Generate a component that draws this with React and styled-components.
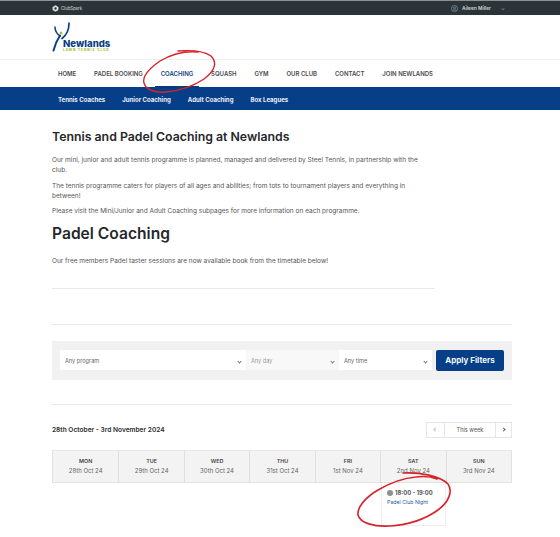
import React from "react";
import styled, { createGlobalStyle } from "styled-components";

const Global = createGlobalStyle`
  html, body { margin: 0; padding: 0; background: #fff; }
  body { font-family: Inter, "Liberation Sans", sans-serif; color: #333; width: 560px; height: 537px; overflow: hidden; }
  * { box-sizing: border-box; }
`;
const Page = styled.div`position: relative; width: 560px; height: 537px; overflow: hidden;`;
const TopBar = styled.div`
  height: 15px; background: #2b3439; border-top: 1px solid #8b9194;
  display: flex; align-items: center; justify-content: space-between; padding: 0 55px 0 52px;
`;
const Brand = styled.div`display: flex; align-items: center; gap: 2px; color: #c3c8ca; font-size: 4.2px; font-weight: 500;`;
const UserMenu = styled.div`display: flex; align-items: center; gap: 4px; color: #cfd3d5; font-size: 4.85px; font-weight: 600;`;
const Caret = styled.span`margin-left: 6px; font-size: 5px; color: #9aa0a3;`;
const LogoRow = styled.div`height: 44px; padding: 7px 0 0 52px;`;
const Logo = styled.div`position: relative; width: 60px; height: 32px;`;
const LogoName = styled.div`
  position: absolute; left: 11px; top: 15.5px; color: #0b3f86; font-size: 9.6px; font-weight: 800; line-height: 12px;
`;
const LogoTag = styled.div`
  position: absolute; left: 11px; top: 26px; color: #a2b92f; font-size: 2.9px; font-weight: 800; letter-spacing: 1.1px; line-height: 4px; white-space: nowrap;
`;
const Nav = styled.nav`
  height: 28px; border-top: 1px solid #eeeeee; display: flex; align-items: center; padding: 0 0 0 58px; gap: 17.85px;
`;
const NavItem = styled.div`
  position: relative; font-size: 6px; font-weight: 600; white-space: nowrap; line-height: 8px;
  color: ${p => (p.$active ? "#0e3f82" : "#4a4a4a")};
`;
const Marker = styled.span`
  position: absolute; left: -6px; right: -6px; top: 16px; height: 2.5px; background: #0a3a7c;
`;
const SubNav = styled.div`
  height: 23px; background: #063f88; display: flex; align-items: center; padding: 1px 0 0 58px; gap: 17px;
`;
const SubItem = styled.div`color: #eaf0f7; font-size: 6.05px; font-weight: 700; white-space: nowrap;`;
const Main = styled.main`padding: 0 48px 0 52px;`;
const Article = styled.article`width: 383px; height: 179px; padding-top: 20px; border-bottom: 1px solid #e8e8e8;`;
const H1 = styled.h1`margin: 0 0 11px; font-size: 12.3px; line-height: 14px; font-weight: 600; color: #25272a; white-space: nowrap;`;
const P = styled.p`margin: 0 0 ${p => p.$mb || 5.5}px; max-width: 372px; font-size: 6.53px; line-height: 10px; color: #555;`;
const H2 = styled.h2`margin: 0 0 12px; font-size: 15.6px; line-height: 20px; font-weight: 600; color: #25272a; white-space: nowrap;`;
const Rule = styled.hr`margin: ${p => p.$top}px 0 0; border: 0; border-top: 1px solid #e8e8e8;`;
const Filters = styled.div`
  margin-top: 16px; height: 38.5px; background: #f1f1f1; padding: 0 8px; display: flex; align-items: center;
`;
const Select = styled.div`
  width: ${p => p.$w}px; height: 20px; background: ${p => (p.$off ? "#f8f8f8" : "#fff")}; display: flex; align-items: center; justify-content: space-between;
  padding: 1px 5px 0 5px;
  font-size: 5.6px; color: ${p => (p.$off ? "#999" : "#666")};
`;
const Chevron = styled.span`
  width: 3px; height: 3px; border-right: 1px solid #777; border-bottom: 1px solid #777; transform: rotate(45deg); margin-top: 1px;
`;
const ApplyBtn = styled.button`
  margin-left: 4px; width: 68px; height: 21px; border: 0; border-radius: 2px; background: #063f88; color: #f2f6fa;
  font-family: inherit; font-size: 8px; font-weight: 700; padding: 0;
`;
const WeekRow = styled.div`margin-top: 17px; height: 16px; display: flex; align-items: center; justify-content: space-between;`;
const WeekLabel = styled.div`font-size: 6.6px; font-weight: 600; color: #2d2d2d; white-space: nowrap;`;
const Pager = styled.div`display: flex; height: 16px; border: 1px solid #e6e6e6;`;
const PageBtn = styled.div`
  width: ${p => p.$w}px; display: flex; align-items: center; justify-content: center; font-size: 5.6px; color: #555;
  & + & { border-left: 1px solid #e6e6e6; }
`;
const Arrow = styled.span`
  width: 3px; height: 3px; border-top: 1px solid ${p => p.$c}; border-right: 1px solid ${p => p.$c};
  transform: rotate(${p => (p.$left ? "-135deg" : "45deg")});
`;
const Days = styled.div`
  margin-top: 12px; height: 33px; display: grid; grid-template-columns: repeat(7, 1fr); background: #f3f3f3;
  border: 1px solid #e2e2e2; border-top-color: #e8e8e8;
`;
const Day = styled.div`
  display: flex; flex-direction: column; align-items: center; justify-content: center; gap: 1.5px; text-align: center;
  & + & { border-left: 1px solid #dedede; }
`;
const DayName = styled.div`font-size: 5.4px; line-height: 7px; font-weight: 600; color: #444;`;
const DayDate = styled.div`font-size: 6px; line-height: 7px; color: #666;`;
const Slots = styled.div`display: grid; grid-template-columns: repeat(7, 1fr);`;
const Slot = styled.div`
  grid-column: 6; height: 43px; padding: 6px 0 0 5.5px; border: 1px solid #eeeeee; border-top: 0;
`;
const SlotTime = styled.div`display: flex; align-items: center; gap: 2px; font-size: 5.8px; line-height: 8px; font-weight: 700; color: #555; white-space: nowrap;`;
const Dot = styled.span`width: 6px; height: 6px; border-radius: 50%; background: #8f8f8f;`;
const SlotName = styled.div`margin-top: 2.5px; font-size: 5.2px; line-height: 7px; color: #2a5aa0; white-space: nowrap;`;
const Scribble = styled.svg`position: absolute; left: 0; top: 0; pointer-events: none;`;

const ClubMark = () => (
  <svg width="7" height="7" viewBox="0 0 24 24">
    <path d="M12 1l10 5.500v11L12 23 2 17.500v-11z" fill="#d9dcdd" />
    <circle cx="12" cy="12" r="4" fill="#2b3439" />
  </svg>
);
const UserIcon = () => (
  <svg width="7" height="7" viewBox="0 0 24 24" fill="none" stroke="#8b9295" strokeWidth="2.400">
    <circle cx="12" cy="12" r="10.500" />
    <circle cx="12" cy="10" r="3.500" />
    <path d="M5.500 19.500c1.500-3.500 11.500-3.500 13 0" />
  </svg>
);
const Racket = () => (
  <svg width="20" height="30" viewBox="0 0 20 30" style={{ position: "absolute", left: 0, top: 0 }}>
    <path d="M1.500 28.500 C3 23 5 18 8 13.500" fill="none" stroke="#0b3f86" strokeWidth="2" strokeLinecap="round" />
    <path d="M3 5 C3 8.500 5 12 8 14" fill="none" stroke="#0b3f86" strokeWidth="1.500" strokeLinecap="round" />
    <path d="M17 1.200 C17 7 14.500 13 10 16.500" fill="none" stroke="#0b3f86" strokeWidth="1.700" strokeLinecap="round" />
    <circle cx="9" cy="11" r="1.500" fill="#a9c03c" />
  </svg>
);

const nav = ["HOME", "PADEL BOOKING", "COACHING", "SQUASH", "GYM", "OUR CLUB", "CONTACT", "JOIN NEWLANDS"];
const sub = ["Tennis Coaches", "Junior Coaching", "Adult Coaching", "Box Leagues"];
const days = [
  ["MON", "28th Oct 24"], ["TUE", "29th Oct 24"], ["WED", "30th Oct 24"], ["THU", "31st Oct 24"],
  ["FRI", "1st Nov 24"], ["SAT", "2nd Nov 24"], ["SUN", "3rd Nov 24"],
];

export default function App() {
  return (
    <Page>
      <Global />
      <TopBar>
        <Brand><ClubMark />ClubSpark</Brand>
        <UserMenu><UserIcon />Aileen Miller<Caret>⌄</Caret></UserMenu>
      </TopBar>
      <LogoRow>
        <Logo>
          <Racket />
          <LogoName>Newlands</LogoName>
          <LogoTag>LAWN TENNIS CLUB</LogoTag>
        </Logo>
      </LogoRow>
      <Nav>
        {nav.map(n => (
          <NavItem key={n} $active={n === "COACHING"}>{n}{n === "COACHING" && <Marker />}</NavItem>
        ))}
      </Nav>
      <SubNav>{sub.map(s => <SubItem key={s}>{s}</SubItem>)}</SubNav>
      <Main>
        <Article>
          <H1>Tennis and Padel Coaching at Newlands</H1>
          <P>Our mini, junior and adult tennis programme is planned, managed and delivered by Steel Tennis, in partnership with the club.</P>
          <P>The tennis programme caters for players of all ages and abilities; from tots to tournament players and everything in between!</P>
          <P $mb={8}>Please visit the Mini/Junior and Adult Coaching subpages for more information on each programme.</P>
          <H2>Padel Coaching</H2>
          <P>Our free members Padel taster sessions are now available book from the timetable below!</P>
        </Article>
        <Rule $top={35} />
        <Filters>
          <Select $w={186}>Any program<Chevron /></Select>
          <Select $w={93} $off>Any day<Chevron /></Select>
          <Select $w={93}>Any time<Chevron /></Select>
          <ApplyBtn>Apply Filters</ApplyBtn>
        </Filters>
        <Rule $top={24} />
        <WeekRow>
          <WeekLabel>28th October - 3rd November 2024</WeekLabel>
          <Pager>
            <PageBtn $w={17}><Arrow $left $c="#bbb" /></PageBtn>
            <PageBtn $w={51}>This week</PageBtn>
            <PageBtn $w={16}><Arrow $c="#555" /></PageBtn>
          </Pager>
        </WeekRow>
        <Days>
          {days.map(([a, b]) => (
            <Day key={a}><DayName>{a}</DayName><DayDate>{b}</DayDate></Day>
          ))}
        </Days>
        <Slots>
          <Slot>
            <SlotTime><Dot />18:00 - 19:00</SlotTime>
            <SlotName>Padel Club Night</SlotName>
          </Slot>
        </Slots>
      </Main>
      <Scribble width="560" height="537" viewBox="0 0 560 537" fill="none">
        <path d="M178 51 C190 50 204 51 211 56 C217 62 216 70 204 79 C192 87 178 91 166 92 C155 93 146 90 144 83 C142 76 150 68 160 61 C172 54 186 51 198 52" stroke="#d8232a" strokeWidth="1.400" strokeLinecap="round" />
        <path d="M403 473 C420 472 440 476 448 484 C453 491 449 502 438 510 C424 520 406 525 390 526 C374 527 360 523 358 515 C357 507 366 497 378 490 C390 483 404 478 416 477 C424 476 432 477 437 479" stroke="#d8232a" strokeWidth="1.600" strokeLinecap="round" />
      </Scribble>
    </Page>
  );
}
